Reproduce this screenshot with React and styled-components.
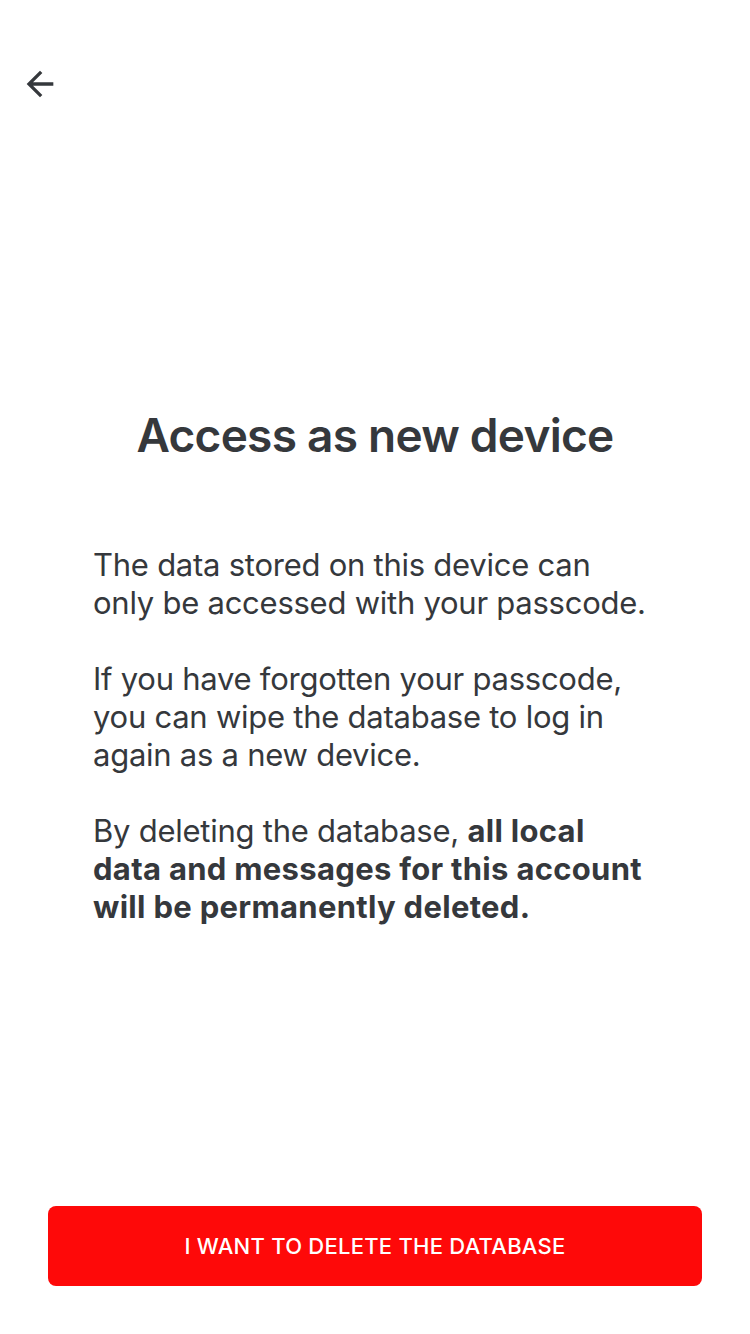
import React from 'react';
import styled, { createGlobalStyle } from 'styled-components';

const GlobalStyle = createGlobalStyle`
    html, body {
        margin: 0;
        padding: 0;
        background: #ffffff;
    }
    body {
        font-family: Inter, "Noto Sans", "Liberation Sans", sans-serif;
        color: #35383c;
        -webkit-font-smoothing: antialiased;
    }
`;

const Screen = styled.div`
    width: 750px;
    height: 1334px;
    display: flex;
    flex-direction: column;
    box-sizing: border-box;
    background: #fff;
`;
const Header = styled.header`
    display: flex;
    align-items: center;
    padding: 64px 20px 0;
    height: 104px;
    box-sizing: border-box;
`;
const BackButton = styled.button`
    width: 40px;
    height: 40px;
    padding: 0;
    border: 0;
    background: transparent;
    color: #35383c;
    display: flex;
    align-items: center;
    justify-content: center;
    cursor: pointer;
`;
const Content = styled.main`
    flex: 1;
    display: flex;
    flex-direction: column;
    padding: 303px 100px 0 93px;
`;
const Title = styled.h1`
    margin: 0 0 83px 7px;
    font-size: 46px;
    line-height: 56px;
    font-weight: 600;
    text-align: center;
    letter-spacing: -0.75px;
`;
const Paragraph = styled.p`
    margin: 0 0 38px;
    font-size: 31px;
    line-height: 38px;
    font-weight: 400;
    letter-spacing: -0.25px;

    strong {
        font-weight: 700;
        letter-spacing: 0.3px;
    }
`;
const Footer = styled.footer`
    padding: 0 48px 48px;
`;
const DangerButton = styled.button`
    width: 100%;
    height: 80px;
    border: 0;
    border-radius: 8px;
    background: #fe0909;
    color: #fff;
    font-family: Inter, "Liberation Sans", sans-serif;
    font-size: 22px;
    font-weight: 500;
    letter-spacing: 0.25px;
    text-transform: uppercase;
    cursor: pointer;
`;

const BackIcon = () => (
    <svg width="40" height="40" viewBox="0 0 24 24" fill="currentColor">
        <path d="M20 11H7.83l5.59-5.59L12 4l-8 8 8 8 1.41-1.41L7.83 13H20v-2z"/>
    </svg>
);

const App = () => (
    <Screen>
        <GlobalStyle/>
        <Header>
            <BackButton aria-label="Back"><BackIcon/></BackButton>
        </Header>
        <Content>
            <Title>Access as new device</Title>
            <Paragraph>The data stored on this device can only be accessed with your passcode.</Paragraph>
            <Paragraph>If you have forgotten your passcode, you can wipe the database to log in again as a new device.</Paragraph>
            <Paragraph>By deleting the database, <strong>all local data and messages for this account will be permanently deleted.</strong></Paragraph>
        </Content>
        <Footer>
            <DangerButton>I want to delete the database</DangerButton>
        </Footer>
    </Screen>
);
export default App;
